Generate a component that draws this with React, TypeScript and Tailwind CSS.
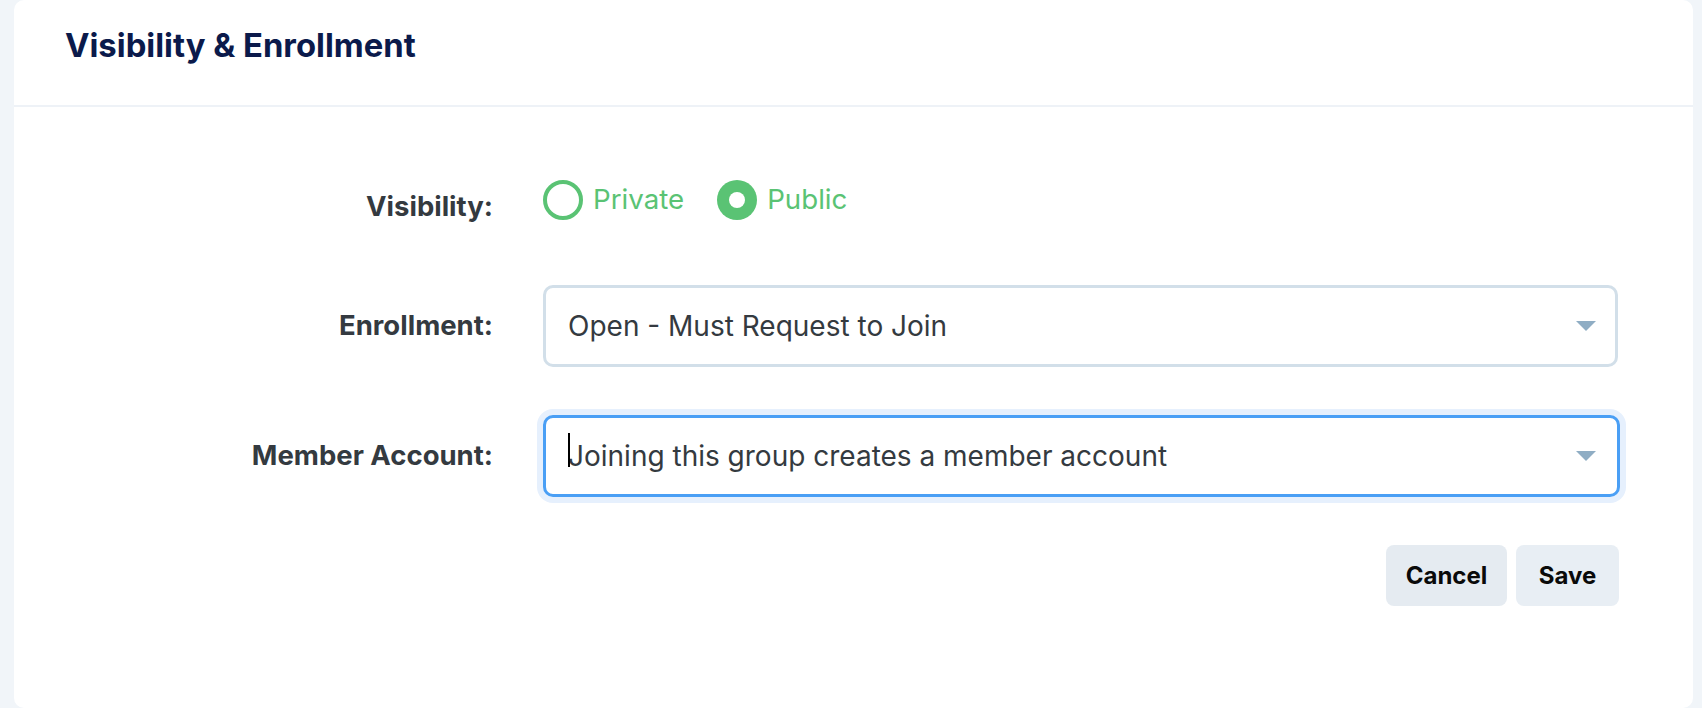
import React from "react";

function Caret() {
  return (
    <svg width="20" height="10" viewBox="0 0 20 10" className="shrink-0">
      <path d="M0 0 L20 0 L10 10 Z" fill="#8fadc4" />
    </svg>
  );
}

function Radio({ checked, label }: { checked: boolean; label: string }) {
  return (
    <div className="flex items-center gap-[10px]">
      {checked ? (
        <span className="flex h-[40px] w-[40px] items-center justify-center rounded-full bg-[#5ac374]">
          <span className="h-[16px] w-[16px] rounded-full bg-white" />
        </span>
      ) : (
        <span className="h-[40px] w-[40px] rounded-full border-[4px] border-[#5ac374] bg-white" />
      )}
      <span className="text-[27.7px] text-[#5ac374]">{label}</span>
    </div>
  );
}

export default function App() {
  return (
    <div
      className="h-[708px] w-full overflow-hidden bg-[#f1f5f9] pl-[14px] pr-[9px]"
      style={{ fontFamily: "Inter, 'Noto Sans', sans-serif" }}
    >
      <div className="flex h-[708px] flex-col rounded-[10px] bg-white">
        <div className="flex h-[107px] items-start border-b-[2px] border-[#eef2f7] pl-[51px] pt-[23px]">
          <h2 className="text-[32.8px] font-bold leading-[44px] text-[#0b1a4b]">
            Visibility &amp; Enrollment
          </h2>
        </div>
        <div className="flex flex-col pt-[52px]">
          <div className="flex h-[82px] items-center">
            <div className="mt-[14px] w-[479px] text-right text-[27.5px] font-bold text-[#343a40]">
              Visibility:
            </div>
            <div className="ml-[50px] flex items-center gap-[33px]">
              <Radio checked={false} label="Private" />
              <Radio checked={true} label="Public" />
            </div>
          </div>

          <div className="mt-[44px] flex h-[82px] items-center">
            <div className="w-[479px] text-right text-[27.5px] font-bold text-[#343a40]">
              Enrollment:
            </div>
            <div className="ml-[50px] flex h-[82px] w-[1075px] items-center justify-between rounded-[10px] border-[3px] border-[#d2dfe9] bg-white pl-[22px] pr-[19px]">
              <span className="text-[28px] text-[#343a40]">Open - Must Request to Join</span>
              <Caret />
            </div>
          </div>

          <div className="mt-[48px] flex h-[82px] items-center">
            <div className="w-[479px] text-right text-[27.5px] font-bold text-[#343a40]">
              Member Account:
            </div>
            <div className="relative ml-[50px] flex h-[82px] w-[1077px] items-center justify-between rounded-[10px] border-[3px] border-[#4a9ff5] bg-white pl-[22px] pr-[21px] shadow-[0_0_0_6px_#e6f0fd]">
              <span className="text-[28px] text-[#343a40]">
                Joining this group creates a member account
              </span>
              <span className="absolute left-[22px] top-[15px] h-[34px] w-[2px] bg-black" />
              <Caret />
            </div>
          </div>

          <div className="mt-[48px] flex justify-end gap-[9px] pr-[74px]">
            <button className="h-[61px] w-[121px] rounded-[8px] bg-[#e5ebf1] text-[24px] font-bold text-[#0a0a0a]">
              Cancel
            </button>
            <button className="h-[61px] w-[103px] rounded-[8px] bg-[#e8eef4] text-[24px] font-bold text-[#0a0a0a]">
              Save
            </button>
          </div>
        </div>
      </div>
    </div>
  );
}
